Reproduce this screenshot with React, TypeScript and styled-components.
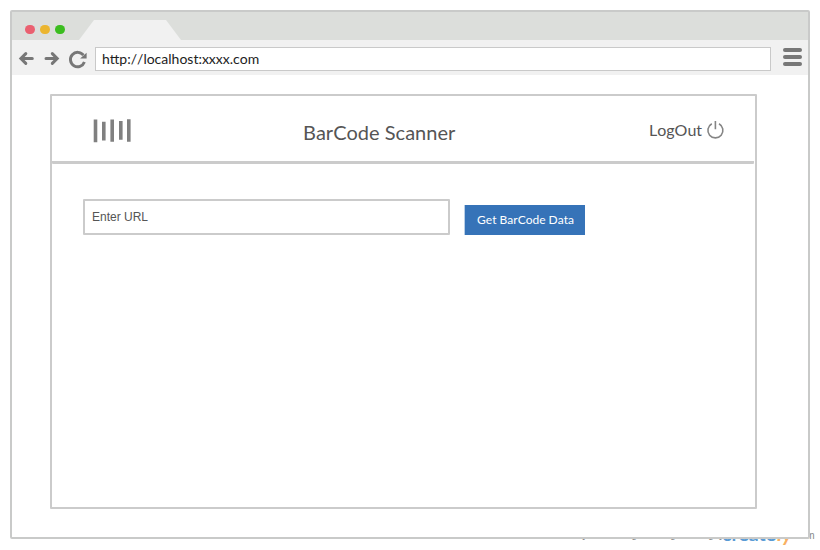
import React from "react";
import styled, { createGlobalStyle } from "styled-components";

const Global = createGlobalStyle`
  * { box-sizing: border-box; }
  body { margin: 0; background: #fff; font-family: Lato, sans-serif; overflow: hidden; }
`;

const Stage = styled.div`
  position: relative;
  width: 820px;
  height: 550px;
  padding: 10px;
  overflow: hidden;
`;

const BrowserWindow = styled.div`
  position: relative;
  width: 800px;
  height: 529px;
  border: 2px solid #c9cac9;
  border-radius: 2px;
  background: #fff;
  display: flex;
  flex-direction: column;
`;

const TabStrip = styled.div`
  display: flex;
  height: 28px;
  background: #dcdedb;
`;

const WindowControls = styled.div`
  display: flex;
  gap: 5.6px;
  padding: 12.8px 0 0 13.3px;
  width: 67px;
`;

const Dot = styled.span<{ $color: string }>`
  width: 9.4px;
  height: 9.4px;
  border-radius: 50%;
  background: ${(p) => p.$color};
`;

const Tab = styled.div`
  width: 103px;
  height: 20px;
  margin-top: 8px;
  background: #f1f1f1;
  clip-path: polygon(15px 0, 87px 0, 102px 100%, 0 100%);
`;

const Toolbar = styled.div`
  display: flex;
  align-items: center;
  height: 35px;
  background: #f1f1f1;
`;

const NavIcons = styled.svg`
  width: 83px;
  height: 35px;
  flex: none;
`;

const AddressBar = styled.div`
  width: 676px;
  height: 24px;
  margin-top: 3px;
  padding-left: 6px;
  border: 1px solid #c9c9c9;
  background: #fff;
  color: #222;
  font-size: 14px;
  font-kerning: none;
  line-height: 22px;
`;

const MenuIcon = styled.div`
  display: flex;
  flex-direction: column;
  gap: 3px;
  margin: -1px 0 0 12px;
`;

const MenuBar = styled.span`
  width: 19px;
  height: 4px;
  border-radius: 2px;
  background: #777;
`;

const Panel = styled.main`
  width: 707px;
  height: 415px;
  margin: 19px 0 0 38px;
  border: 2px solid #cbcbcb;
  border-radius: 1px;
  background: #fff;
`;

const PanelHeader = styled.header`
  display: grid;
  grid-template-columns: 251px 346px auto;
  width: 702px;
  height: 68px;
  border-bottom: 3px solid #cbcbcb;
  border-radius: 1px;
  color: #555;
`;

const Barcode = styled.svg`
  width: 40px;
  height: 26px;
  margin: 22px 0 0 41px;
`;

const Title = styled.h1`
  margin: 23px 0 0;
  font-size: 20px;
  font-weight: 400;
  font-kerning: none;
  line-height: 26px;
`;

const LogOut = styled.div`
  display: flex;
  gap: 4px;
  margin-top: 23px;
  font-size: 16px;
  font-kerning: none;
  line-height: 22px;
`;

const LogOutLabel = styled.span`
  width: 53px;
`;

const PowerIcon = styled.svg`
  width: 19px;
  height: 20px;
  margin-top: 1px;
`;

const Form = styled.div`
  display: flex;
  padding: 35px 0 0 31px;
`;

const UrlField = styled.div`
  width: 367px;
  height: 36px;
  padding-left: 7px;
  border: 2px solid #cbcbcb;
  border-radius: 1px;
  color: #555;
  font: 12px/33px "Liberation Sans", Arial, sans-serif;
`;

const SubmitButton = styled.button`
  width: 121px;
  height: 30px;
  margin: 6px 0 0 14px;
  padding: 0 0 1px 1px;
  border: 0;
  border-left: 1px solid #b9cfe7;
  background: #3673b8;
  color: #fff;
  font: 12px Lato, sans-serif;
  font-kerning: none;
  white-space: nowrap;
`;

/* Credit line partly covered by the browser window. */
const Credit = styled.div`
  position: absolute;
  top: 521px;
  left: 582px;
  display: flex;
  align-items: baseline;
  white-space: nowrap;
  color: #888;
  font: 10px/20px "Liberation Sans", Arial, sans-serif;
`;

const CreditText = styled.span`
  position: relative;
  top: -1px;
  width: 140px;
`;

const Brand = styled.span<{ $accent?: boolean }>`
  position: relative;
  top: 2px;
  width: ${(p) => (p.$accent ? 16 : 55)}px;
  color: ${(p) => (p.$accent ? "#f8b062" : "#5a9bd5")};
  font-family: Lato, sans-serif;
  font-size: ${(p) => (p.$accent ? 21 : 19.5)}px;
  font-weight: 700;
  font-style: ${(p) => (p.$accent ? "italic" : "normal")};
`;

export default function App() {
  return (
    <>
      <Global />
      <Stage>
        <Credit>
          <CreditText>[Online Diagramming &amp; Design]</CreditText>
          <Brand>create</Brand>
          <Brand $accent>ly</Brand>
          <span>.com</span>
        </Credit>
        <BrowserWindow>
          <TabStrip>
            <WindowControls>
              <Dot $color="#ea6070" />
              <Dot $color="#ebb52f" />
              <Dot $color="#3bbd1f" />
            </WindowControls>
            <Tab />
          </TabStrip>
          <Toolbar>
            <NavIcons viewBox="12 40 83 35" fill="none" stroke="#777" strokeWidth="3">
              <path strokeLinecap="round" d="M32.3 58.5H21.5M25.8 53.6L20.9 58.5l4.9 4.9" />
              <path strokeLinecap="round" d="M46 58.5h10.8M52.3 53.6l4.9 4.9-4.9 4.9" />
              <path d="M83.4 55.2A7.2 7.2 0 1 0 84.4 62" strokeWidth="2.9" />
              <path d="M86.6 52.8v5.6h-6.5z" fill="#777" stroke="none" />
            </NavIcons>
            <AddressBar>http://localhost:xxxx.com</AddressBar>
            <MenuIcon>
              <MenuBar />
              <MenuBar />
              <MenuBar />
            </MenuIcon>
          </Toolbar>
          <Panel>
            <PanelHeader>
              <Barcode viewBox="93 118 40 26" fill="#808080">
                <path d="M93.7 119.6h3.6v22.6h-3.6zM102 121.7h3.6v18.8H102zM110.4 119.4h3.6v22.4h-3.6zM119 121h3.6v18.8H119zM127 119.2h3.6v22.5H127z" />
              </Barcode>
              <Title>BarCode Scanner</Title>
              <LogOut>
                <LogOutLabel>LogOut</LogOutLabel>
                <PowerIcon viewBox="706 120 19 20" fill="none" stroke="#858585" strokeWidth="1.6">
                  <path d="M711.8 123.8a7.5 7.5 0 1 0 7.2 0M715.4 121v8.3" />
                </PowerIcon>
              </LogOut>
            </PanelHeader>
            <Form>
              <UrlField>Enter URL</UrlField>
              <SubmitButton>Get BarCode Data</SubmitButton>
            </Form>
          </Panel>
        </BrowserWindow>
      </Stage>
    </>
  );
}
